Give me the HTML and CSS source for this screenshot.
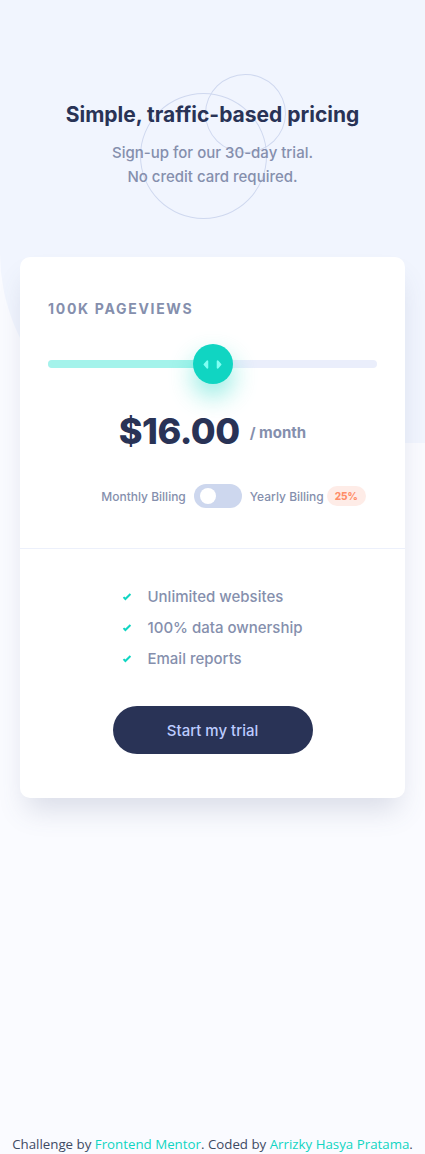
FILE: index.html
```html
<!DOCTYPE html>
<html lang="en">
<head>
<meta charset="utf-8">
<meta name="viewport" content="width=device-width, initial-scale=1">
<title>Interactive pricing component</title>
<link rel="stylesheet" href="styles.css">
</head>
<body>
<div class="bg-shape" aria-hidden="true">
  <span class="circle circle-small"></span>
  <span class="circle circle-large"></span>
</div>
<main class="page">
  <header class="intro">
    <h1 class="intro-title">Simple, traffic-based pricing</h1>
    <p class="intro-text">Sign-up for our 30-day trial.<br>No credit card required.</p>
  </header>
  <section class="card">
    <div class="card-top">
      <p class="views">100K Pageviews</p>
      <div class="slider">
        <div class="track"><div class="track-fill" style="width: 50%"></div></div>
        <div class="thumb" style="left: 50%">
          <svg width="19" height="11" viewBox="0 0 22 13" aria-hidden="true"><path fill="#80FFF3" fill-rule="evenodd" d="M16 2.558v7.884a1 1 0 001.735.679l3.639-3.943a1 1 0 000-1.356l-3.64-3.943A1 1 0 0016 2.558zM6 2.558v7.884a1 1 0 01-1.735.679L.626 7.178a1 1 0 010-1.356l3.64-3.943A1 1 0 016 2.558z"/></svg>
        </div>
      </div>
      <div class="price">
        <span class="price-amount">$16.00</span>
        <span class="price-period">/ month</span>
      </div>
      <div class="billing">
        <span class="billing-label">Monthly Billing</span>
        <span class="toggle"><span class="toggle-knob"></span></span>
        <span class="billing-label yearly">Yearly Billing<span class="discount">25%</span></span>
      </div>
    </div>
    <div class="card-bottom">
      <ul class="features">
        <li class="feature"><svg class="check" width="10" height="8" viewBox="0 0 9 8" aria-hidden="true"><path fill="none" stroke="#10D5C2" stroke-width="2" d="M1 4.134l1.907 1.908L7.949 1"/></svg>Unlimited websites</li>
        <li class="feature"><svg class="check" width="10" height="8" viewBox="0 0 9 8" aria-hidden="true"><path fill="none" stroke="#10D5C2" stroke-width="2" d="M1 4.134l1.907 1.908L7.949 1"/></svg>100% data ownership</li>
        <li class="feature"><svg class="check" width="10" height="8" viewBox="0 0 9 8" aria-hidden="true"><path fill="none" stroke="#10D5C2" stroke-width="2" d="M1 4.134l1.907 1.908L7.949 1"/></svg>Email reports</li>
      </ul>
      <button class="cta" type="button">Start my trial</button>
    </div>
  </section>
</main>
<footer class="attribution">
  Challenge by <a href="#">Frontend Mentor</a>. Coded by <a href="#">Arrizky Hasya Pratama</a>.
</footer>
</body>
</html>
```

FILE: styles.css
```css
* { box-sizing: border-box; }

html, body { margin: 0; padding: 0; }

body {
  min-height: 100vh;
  display: flex;
  flex-direction: column;
  background: #fafbff;
  font-family: Inter, "Noto Sans", sans-serif;
  color: #858fad;
  position: relative;
  overflow-x: hidden;
}

.bg-shape {
  position: absolute;
  top: 0;
  left: 0;
  width: 100%;
  height: 443px;
  background: #f1f5fe;
  border-bottom-left-radius: 190px;
  z-index: 0;
}

.circle {
  position: absolute;
  border: 1px solid #cfd8ef;
  border-radius: 50%;
}

.circle-small {
  left: 205px;
  top: 74px;
  width: 81px;
  height: 79px;
}

.circle-large {
  left: 140px;
  top: 93px;
  width: 127px;
  height: 126px;
}

.page {
  position: relative;
  z-index: 1;
  flex: 1;
  display: flex;
  flex-direction: column;
  align-items: center;
  padding: 101px 20px 0;
}

.intro { text-align: center; }

.intro-title {
  margin: 0;
  font-size: 21px;
  line-height: 28px;
  font-weight: 700;
  color: #293356;
}

.intro-text {
  margin: 12px 0 0;
  font-size: 15px;
  line-height: 24px;
  font-weight: 500;
}

.card {
  margin-top: 68px;
  width: 385px;
  background: #fff;
  border-radius: 10px;
  box-shadow: 0 18px 28px -6px rgba(80, 90, 130, 0.18);
}

.card-top {
  padding: 42px 28px 40px;
  border-bottom: 1px solid #ecf0fb;
}

.views {
  margin: 0;
  font-size: 14px;
  line-height: 20px;
  font-weight: 700;
  letter-spacing: 1.7px;
  text-transform: uppercase;
}

.slider {
  position: relative;
  margin-top: 25px;
  height: 40px;
  display: flex;
  align-items: center;
}

.track {
  width: 100%;
  height: 8px;
  border-radius: 4px;
  background: #eaeefb;
  overflow: hidden;
}

.track-fill {
  height: 100%;
  background: #a4f3eb;
}

.thumb {
  position: absolute;
  top: 0;
  width: 40px;
  height: 40px;
  margin-left: -20px;
  border-radius: 50%;
  background: #10d5c2;
  box-shadow: 0 12px 24px rgba(16, 213, 194, 0.45);
  display: flex;
  align-items: center;
  justify-content: center;
}

.price {
  margin-top: 25px;
  display: flex;
  align-items: center;
  justify-content: center;
  gap: 10px;
  height: 44px;
}

.price-amount {
  font-size: 36px;
  line-height: 44px;
  font-weight: 800;
  letter-spacing: -0.5px;
  color: #293356;
}

.price-period {
  font-size: 15px;
  font-weight: 700;
  padding-top: 2px;
}

.billing {
  margin-top: 31px;
  display: flex;
  align-items: center;
  justify-content: center;
  gap: 8px;
  height: 24px;
}

.billing-label {
  font-size: 12px;
  font-weight: 500;
}

.yearly { position: relative; }

.discount {
  position: absolute;
  left: calc(100% + 3px);
  top: 50%;
  transform: translateY(-50%);
  width: 39px;
  height: 20px;
  border-radius: 10px;
  background: #feece7;
  color: #ff8d68;
  font-size: 10px;
  font-weight: 800;
  display: flex;
  align-items: center;
  justify-content: center;
}

.toggle {
  width: 48px;
  height: 24px;
  border-radius: 12px;
  background: #cdd7ee;
  display: flex;
  align-items: center;
  padding-left: 6px;
}

.toggle-knob {
  width: 16px;
  height: 16px;
  border-radius: 50%;
  background: #fff;
}

.card-bottom {
  padding: 32px 28px 44px;
  display: flex;
  flex-direction: column;
  align-items: center;
}

.features {
  list-style: none;
  margin: 0;
  padding: 0;
}

.feature {
  display: flex;
  align-items: center;
  gap: 15px;
  font-size: 15px;
  line-height: 31px;
  font-weight: 500;
}

.check { flex: none; }

.cta {
  margin-top: 32px;
  width: 200px;
  height: 48px;
  border: 0;
  border-radius: 24px;
  background: #293356;
  color: #bdccff;
  font-family: inherit;
  font-size: 15px;
  font-weight: 500;
}

.attribution {
  position: relative;
  z-index: 1;
  text-align: center;
  font-family: "Open Sans", sans-serif;
  font-size: 13.3px;
  line-height: 18px;
  color: #3e4a63;
  padding: 0 0 1px;
}

.attribution a {
  color: #10d5c2;
  text-decoration: none;
}
```
